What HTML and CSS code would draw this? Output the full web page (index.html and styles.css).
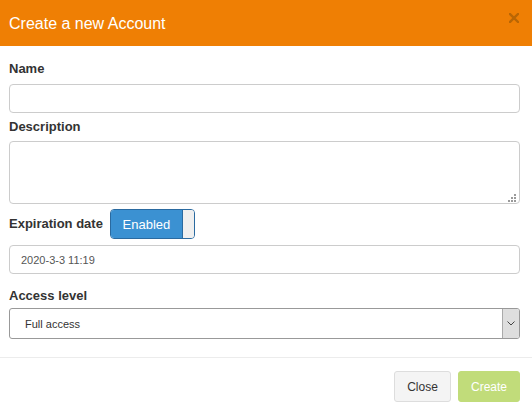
FILE: index.html
```html
<!DOCTYPE html>
<html>
<head>
<meta charset="utf-8">
<link rel="stylesheet" href="styles.css">
</head>
<body>
<div class="modal">
  <div class="modal-header">
    <h4 class="modal-title">Create a new Account</h4>
    <span class="close-btn" aria-label="close">
      <svg width="10" height="10" viewBox="0 0 10 10"><path d="M1 1L9 9M9 1L1 9" stroke="#b96604" stroke-width="2.4" stroke-linecap="square"/></svg>
    </span>
  </div>
  <div class="modal-body">
    <label class="field-label">Name</label>
    <input class="text-input" type="text">
    <label class="field-label gap-top">Description</label>
    <div class="textarea-wrap">
      <textarea class="text-area"></textarea>
      <svg class="grip" width="9" height="9" viewBox="0 0 9 9" fill="#9a9a9a">
        <rect x="6" y="0" width="2" height="2"/>
        <rect x="3" y="3" width="2" height="2"/><rect x="6" y="3" width="2" height="2"/>
        <rect x="0" y="6" width="2" height="2"/><rect x="3" y="6" width="2" height="2"/><rect x="6" y="6" width="2" height="2"/>
      </svg>
    </div>
    <div class="exp-row">
      <label class="field-label inline">Expiration date</label>
      <div class="switch">
        <span class="switch-on">Enabled</span>
        <span class="switch-handle"></span>
      </div>
    </div>
    <input class="text-input date-input" type="text" value="2020-3-3 11:19">
    <label class="field-label access-label">Access level</label>
    <div class="select-wrap">
      <select class="select"><option>Full access</option></select>
      <span class="select-arrow">
        <svg width="8" height="5" viewBox="0 0 8 5"><path d="M0.5 0.5L4 4L7.5 0.5" fill="none" stroke="#444" stroke-width="1"/></svg>
      </span>
    </div>
  </div>
  <div class="modal-footer">
    <button class="btn btn-default">Close</button>
    <button class="btn btn-create">Create</button>
  </div>
</div>
</body>
</html>
```
FILE: styles.css
```css
* { box-sizing: border-box; }
html, body { margin: 0; padding: 0; background: #fff; }
body { font-family: "Liberation Sans", Arial, sans-serif; color: #333; }

.modal { width: 532px; height: 415px; display: flex; flex-direction: column; }

.modal-header {
  flex-shrink: 0;
  height: 46px;
  background: #ef7f04;
  display: flex;
  align-items: center;
  justify-content: space-between;
  padding: 0 13px 0 9px;
}
.modal-title {
  margin: 0;
  font-size: 16px;
  font-weight: normal;
  color: #fff;
  line-height: 20px;
  padding-top: 1px;
}
.close-btn { display: flex; width: 10px; height: 10px; align-self: flex-start; margin-top: 13px; }

.modal-body {
  flex-shrink: 0;
  padding: 14px 12px 18px 9px;
  display: flex;
  flex-direction: column;
}
.field-label {
  display: block;
  font-size: 13px;
  font-weight: bold;
  line-height: 18px;
  margin-bottom: 6px;
}
.field-label.gap-top { margin-top: 5px; margin-bottom: 5px; }
.field-label.inline { margin: 0; }
.field-label.access-label { margin-top: 13px; margin-bottom: 3px; }

.text-input {
  height: 29px;
  width: 100%;
  border: 1px solid #ccc;
  border-radius: 4px;
  font-family: "Liberation Sans", Arial, sans-serif;
  font-size: 11px;
  color: #555;
  padding: 0 11px;
  outline: none;
}
.date-input { margin-top: 6px; }

.textarea-wrap { position: relative; height: 63px; }
.text-area {
  display: block;
  width: 100%;
  height: 63px;
  border: 1px solid #ccc;
  border-radius: 4px;
  resize: none;
  outline: none;
}
.grip { position: absolute; right: 3px; bottom: 1px; }

.exp-row {
  display: flex;
  align-items: center;
  gap: 7px;
  margin-top: 5px;
}
.switch {
  display: flex;
  width: 85px;
  height: 30px;
  border: 1px solid #2a6aa0;
  border-radius: 4px;
  overflow: hidden;
}
.switch-on {
  width: 72px;
  background: #3b91d2;
  color: #fff;
  font-size: 13px;
  display: flex;
  align-items: center;
  justify-content: center;
  border-right: 1px solid #2a6aa0;
}
.switch-handle { flex: 1; background: #efefef; }

.select-wrap { position: relative; height: 31px; }
.select {
  appearance: none;
  -webkit-appearance: none;
  width: 100%;
  height: 31px;
  border: 1px solid #999;
  border-radius: 3px;
  background: #fff;
  font-family: "Liberation Sans", Arial, sans-serif;
  font-size: 11px;
  color: #333;
  padding: 0 15px;
  outline: none;
}
.select-arrow {
  position: absolute;
  right: 1px;
  top: 1px;
  bottom: 1px;
  width: 17px;
  background: #dedede;
  border-left: 1px solid #aaa;
  border-radius: 0 2px 2px 0;
  display: flex;
  align-items: center;
  justify-content: center;
}

.modal-footer {
  flex-shrink: 0;
  border-top: 1px solid #ececec;
  padding: 13px 12px 13px 9px;
  display: flex;
  justify-content: flex-end;
  gap: 7px;
}
.btn {
  height: 31px;
  padding: 0 12px;
  font-family: "Liberation Sans", Arial, sans-serif;
  font-size: 12px;
  border-radius: 3px;
  border: 1px solid #ddd;
}
.btn-default { background: #f4f4f4; color: #333; width: 57px; }
.btn-create { background: #c1dc7a; border-color: #c1dc7a; color: #fff; width: 62px; }
```
